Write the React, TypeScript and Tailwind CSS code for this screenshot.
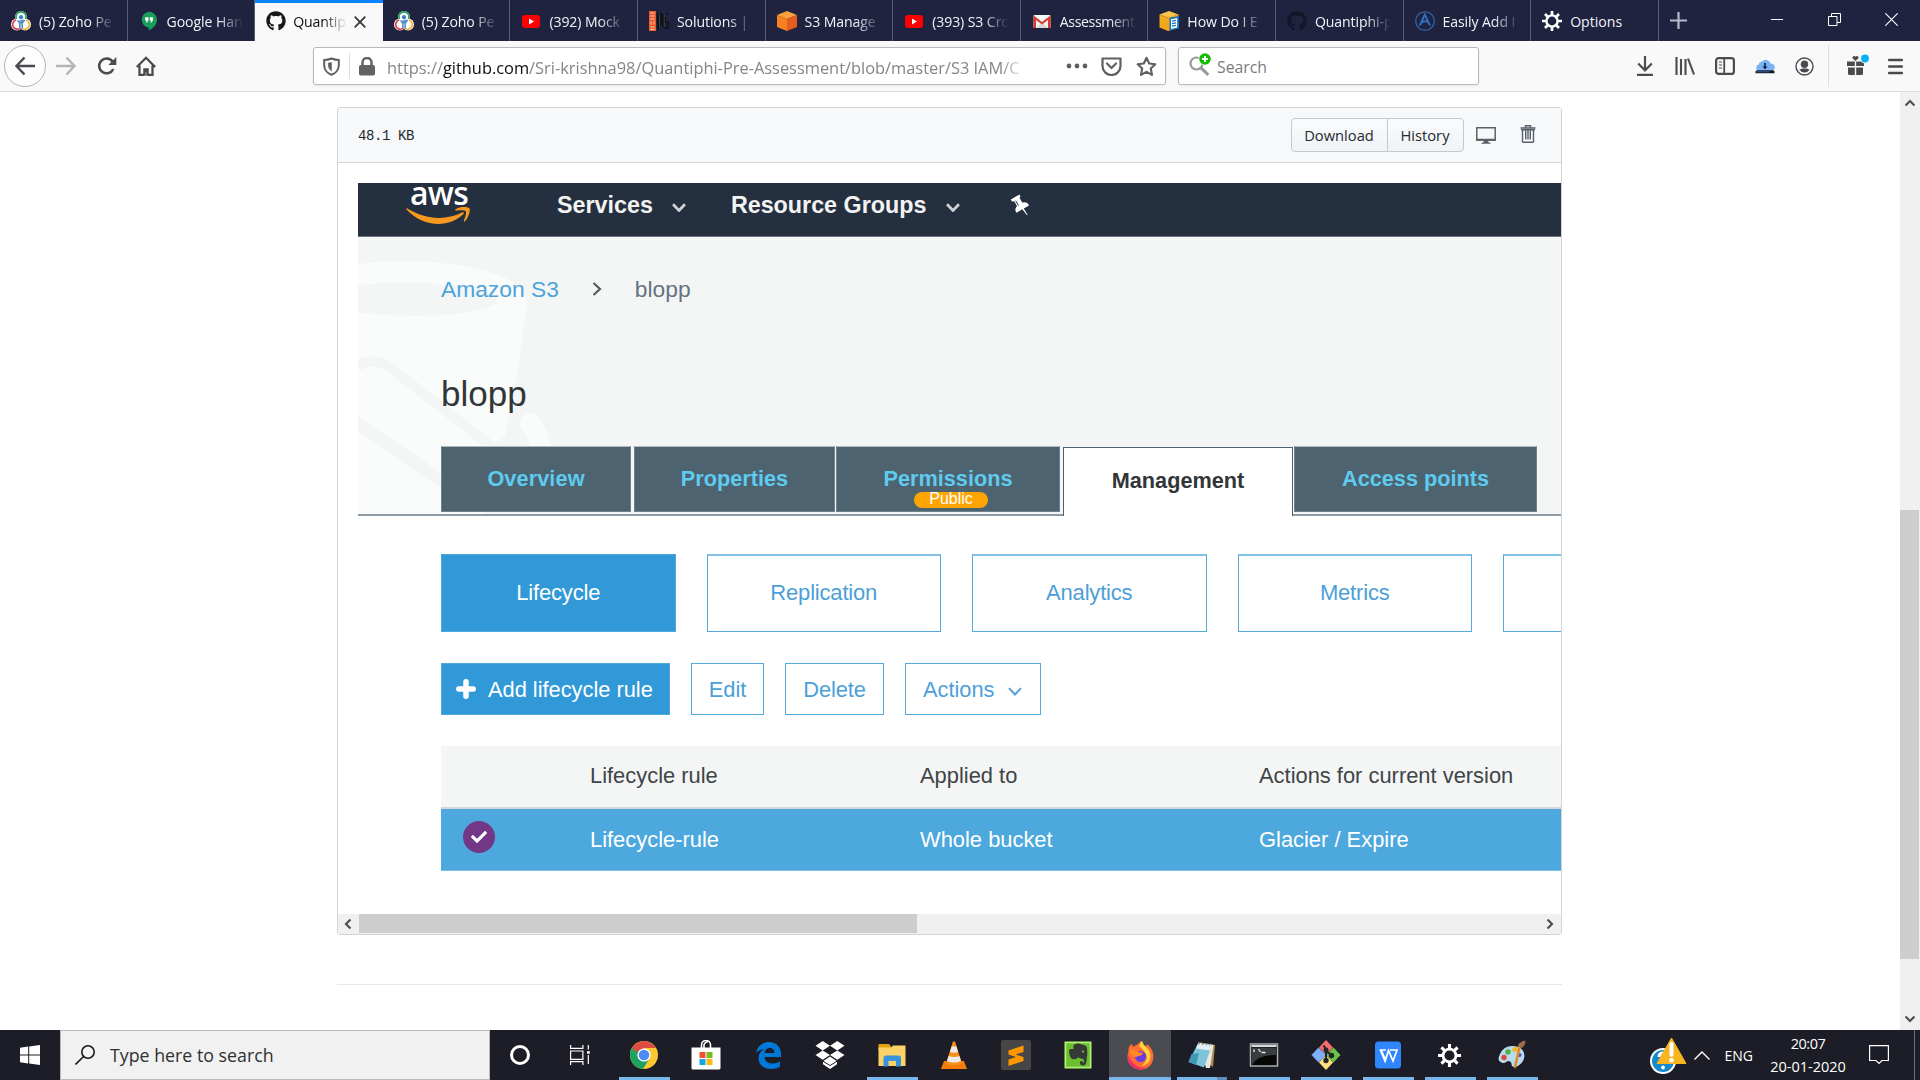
import React from "react";
import { FaGithub, FaCheck } from "react-icons/fa";

type Kids = { children?: React.ReactNode };

/* ---------- favicons ---------- */
const Zoho = () => (
  <svg className="size-5 shrink-0" viewBox="0 0 20 20" fill="none">
    <circle cx="10" cy="6" r="6" fill="#fff" />
    <circle cx="6" cy="13.5" r="6" fill="#fff" />
    <circle cx="14" cy="13.5" r="6" fill="#fff" />
    <path d="M5.5 8A5 5 0 1 1 14.5 8" stroke="#2f9e5a" strokeWidth="1.7" />
    <path d="M5 9A4.7 4.7 0 1 0 9.5 17" stroke="#e0343c" strokeWidth="1.6" />
    <path d="M15 9A4.7 4.7 0 1 1 10.5 17" stroke="#f3b32a" strokeWidth="1.6" />
    <circle cx="10" cy="6.2" r="2.1" fill="#3d7fc4" />
    <path d="M5.5 9.2Q8 10 10 9T14.5 9.2L12 12.5V17.5H8V12.5Z" fill="#5a90cc" />
    <path d="M10 12.5v5" stroke="#dfe9f5" strokeWidth="0.8" />
  </svg>
);
const Hangouts = () => (
  <svg className="size-5 shrink-0" viewBox="0 0 20 20">
    <path d="M10 .8A8 8 0 0 0 9.7 16.7V19.6C14 17.5 18 13.5 18 8.9A8 8 0 0 0 10 .8Z" fill="#1a9c5b" />
    <path d="M6.2 6.2h3.2v3.3L8 11.6H6.9L7.7 9.4H6.2ZM10.7 6.2h3.2v3.3l-1.4 2.1h-1.1l.8-2.2h-1.5Z" fill="#fff" />
  </svg>
);
const YouTube = () => (
  <svg className="size-5 shrink-0" viewBox="0 0 20 20">
    <rect x="1" y="4" width="18" height="13" rx="3" fill="#f00" />
    <path d="M8 7.5 13 10.5 8 13.5Z" fill="#fff" />
  </svg>
);
const Solutions = () => (
  <svg className="size-5 shrink-0" viewBox="0 0 20 20" fill="none">
    <rect x="0" y="0" width="7" height="20" fill="#ee5a24" />
    <path d="M1.5 2h4M1.5 5h4M1.5 8h4M2 10.5v3M5 10.5v3M1.5 16h4M1.5 18.5h4" stroke="#d8d2d2" strokeWidth="1" />
    <path d="M9 2v15M12 2v11l-3 5M14 3v14M17 3h2M16 6v5h3v6h-4" stroke="#111" strokeWidth="1.6" />
    <path d="M10.5 3v14M15.2 3v13" stroke="#555" strokeWidth="0.6" />
  </svg>
);
const S3Cube = () => (
  <svg className="size-5 shrink-0" viewBox="0 0 20 20">
    <path d="M10 0 20 4 10 8 0 4Z" fill="#f9a13a" />
    <path d="M0 4 10 8V20L0 16Z" fill="#f58220" />
    <path d="M20 4 10 8V20L20 16Z" fill="#e65c1e" />
  </svg>
);
const Gmail = () => (
  <svg className="size-5 shrink-0" viewBox="0 0 20 20">
    <rect x="1.5" y="4" width="17" height="13" rx="1" fill="#f2f2f2" />
    <path d="M4 17 10 12l6 5Z" fill="#d5d5d5" />
    <path d="M1.5 17V4.5L10 11 18.5 4.5V17H16V9L10 13.5 4 9V17Z" fill="#d93a2f" />
    <path d="M4 4H16L10 8.7Z" fill="#fafafa" />
  </svg>
);
const AwsDocs = () => (
  <svg className="size-5 shrink-0" viewBox="0 0 20 20">
    <path d="M10 0 19.5 3.5 10 7 .5 3.5Z" fill="#fcc34c" />
    <path d="M.5 3.5 9 6.8V20L.5 16.500Z" fill="#f2a81d" />
    <path d="M9 6.8 19.5 3.5V17L9 20Z" fill="#f2a81d" />
    <path d="M10.5 6.8 20 5V17.5L10.5 19.5Z" fill="#0d73bb" />
    <path d="M12 8.2 18.2 7V16.5L12 18Z" fill="#fff" />
    <path d="M13 10.2l4-.8M13 12.7l4-.8M13 15.2l4-.8" stroke="#0d73bb" strokeWidth="1.3" />
  </svg>
);
const CircleA = () => (
  <svg className="size-5 shrink-0" viewBox="0 0 20 20" fill="none" stroke="#2f6fbd">
    <circle cx="10" cy="10" r="9.3" strokeWidth="1.1" />
    <path d="M4.8 14.5 9.8 3.5 15 14.5M6.5 11.5Q10 9 13.7 11.5" strokeWidth="1.9" />
  </svg>
);
const Cog = ({ className }: { className: string }) => (
  <svg className={className} viewBox="0 0 20 20" fill="none" stroke="currentColor">
    <circle cx="10" cy="10" r="5.6" strokeWidth="2.4" />
    <path d="M10 4V0M10 16v4M4 10H0M16 10h4M5.7 5.7 3 3M14.3 5.7 17 3M5.7 14.3 3 17M14.3 14.3 17 17" strokeWidth="2.7" />
  </svg>
);

const tabs: { icon: React.ReactNode; text: string; active?: boolean }[] = [
  { icon: <Zoho />, text: "(5) Zoho Pe" },
  { icon: <Hangouts />, text: "Google Han" },
  { icon: <FaGithub className="size-5 shrink-0 text-[#191717]" />, text: "Quantip", active: true },
  { icon: <Zoho />, text: "(5) Zoho Pe" },
  { icon: <YouTube />, text: "(392) Mock" },
  { icon: <Solutions />, text: "Solutions | (" },
  { icon: <S3Cube />, text: "S3 Manage" },
  { icon: <YouTube />, text: "(393) S3 Cro" },
  { icon: <Gmail />, text: "Assessment" },
  { icon: <AwsDocs />, text: "How Do I E" },
  { icon: <FaGithub className="size-5 shrink-0 text-[#15152a]" />, text: "Quantiphi-p" },
  { icon: <CircleA />, text: "Easily Add I" },
  { icon: <Cog className="size-5 shrink-0 text-white" />, text: "Options" },
];

function TabBar() {
  return (
    <div className="flex h-[41px] bg-[#202340] text-[14.1px] text-[#f2f2f7]">
      {tabs.map((t, i) => (
        <div
          key={i}
          className={
            t.active
              ? "flex w-[127.6px] shrink-0 items-center border-t-[3px] border-[#0a84ff] bg-[#f9f9fa] pl-[11px] text-[#0c0c0d]"
              : "flex w-[127.6px] shrink-0 items-center border-r border-[#5b5d74] pl-[11px] pt-px"
          }
        >
          <span className={t.active ? "-translate-y-px" : ""}>{t.icon}</span>
          <div
            className={
              t.active
                ? "ml-[7px] w-[54px] whitespace-nowrap tracking-[-0.1px] [mask-image:linear-gradient(to_right,#000_55%,transparent)]"
                : t.text === "Options"
                  ? "ml-2 translate-y-[0.5px] whitespace-nowrap"
                  : t.text === "Assessment"
                    ? "ml-2 w-[77px] translate-y-[0.5px] whitespace-nowrap tracking-[-0.35px] [mask-image:linear-gradient(to_right,#000_65%,transparent)]"
                    : "ml-2 w-[78px] translate-y-[0.5px] whitespace-nowrap tracking-[-0.1px] [mask-image:linear-gradient(to_right,#000_65%,transparent_98%)]"
            }
          >
            {t.text}
          </div>
          {t.active && (
            <svg className="ml-[7px] size-3 shrink-0" viewBox="0 0 12 12" stroke="#38383d" strokeWidth="1.8">
              <path d="M.7.7 11.3 11.3M11.3.7.7 11.3" />
            </svg>
          )}
        </div>
      ))}
      <svg className="ml-[11px] mt-3 size-[17px]" viewBox="0 0 17 17" stroke="#b9bac6" strokeWidth="2.2">
        <path d="M8.5 0v17M0 8.5h17" />
      </svg>
      <div className="ml-auto flex items-start pr-[22px] pt-[13px]">
        <svg className="mr-[45px] h-3.5 w-3" viewBox="0 0 12 14" stroke="#fff"><path d="M0 6.5h12" /></svg>
        <svg className="mr-11 size-[13px]" viewBox="0 0 13 13" stroke="#fff" fill="none"><path d="M.5 3.5h8.5v9H.5ZM3.5 3.5v-3h9v9H9" /></svg>
        <svg className="size-[13px]" viewBox="0 0 13 13" stroke="#fff" strokeWidth="1.1"><path d="M.3.3 12.7 12.7M12.7.3.3 12.7" /></svg>
      </div>
    </div>
  );
}

function NavBar() {
  return (
    <div className="flex h-[51px] items-center border-b border-[#dcdcdd] bg-[#f9f9fa] text-[#4a4a4f]">
      <div className="ml-[4px] flex size-[42px] items-center justify-center rounded-full border border-[#b4b4b5] bg-[#fdfdfd]">
        <svg className="size-5" viewBox="0 0 20 20" fill="none" stroke="currentColor" strokeWidth="2.4"><path d="M20 10H1.5M9.5 1.5 1.5 10l8 8.5" /></svg>
      </div>
      <svg className="ml-[10px] size-5" viewBox="0 0 20 20" fill="none" stroke="#b5b5b7" strokeWidth="2.4"><path d="M0 10H18.500M10.5 1.5 18.5 10l-8 8.5" /></svg>
      <svg className="ml-[21px] size-5" viewBox="0 0 20 20" fill="none" stroke="currentColor" strokeWidth="2.5">
        <path d="M16.300 13A7.4 7.4 0 1 1 15.500 5.500" /><path d="M19.300 1v8h-8Z" fill="currentColor" stroke="none" />
      </svg>
      <svg className="ml-[19px] size-5" viewBox="0 0 20 20" fill="none" stroke="currentColor" strokeWidth="2.3">
        <path d="M.8 11 10 1.8 19.200 11M3.500 9.500V18.800H8M16.500 9.500V18.800H12" /><path d="M7.500 19.500v-7h5v7h-2v-3.500h-1v3.500Z" fill="currentColor" strokeWidth="0.5" />
      </svg>
      <div className="ml-[157px] flex h-[38px] w-[853px] items-center rounded-[3px] border border-[#b9b9bb] bg-white shadow-[0_1px_3px_rgba(0,0,0,0.08)]">
        <svg className="ml-[9px] h-[19px] w-[17px]" viewBox="0 0 17 19" fill="none" stroke="#5f5f63" strokeWidth="2">
          <path d="M8.5 1.500C11 2.500 13.500 3 15.800 3V8.500C15.800 13 12 16.500 8.500 17.800C5 16.500 1.200 13 1.200 8.500V3C3.500 3 6 2.500 8.500 1.500Z" />
          <path d="M8.500 5.500V14C6.500 12.500 5.300 10.500 5.300 8V6Z" fill="#5f5f63" strokeWidth="0.5" />
        </svg>
        <div className="ml-[9px] h-[26px] w-px bg-[#dcdcdd]" />
        <svg className="ml-[9px] h-[19px] w-4" viewBox="0 0 16 19" fill="none">
          <rect y="8" width="16" height="10.500" rx="1.800" fill="#636366" /><path d="M3.500 9V5.500a4.500 4.500 0 0 1 9 0V9" stroke="#636366" strokeWidth="2.5" />
        </svg>
        <div className="ml-3 mt-[4px] w-[639px] whitespace-nowrap text-[16.4px] text-[#858588] [mask-image:linear-gradient(to_right,#000_96%,transparent_100%)]">
          https://<span className="text-[#0c0c0d]">github.com</span>/Sri-krishna98/Quantiphi-Pre-Assessment/blob/master/S3 IAM/C
        </div>
        <svg className="ml-[40px] h-5 w-[22px]" viewBox="0 0 22 20" fill="#5f5f63"><circle cx="3" cy="10" r="2.4" /><circle cx="11" cy="10" r="2.4" /><circle cx="19" cy="10" r="2.4" /></svg>
        <svg className="ml-[13px] h-[19px] w-[21px]" viewBox="0 0 21 19" fill="none" stroke="#5f5f63" strokeWidth="2.2" strokeLinejoin="round">
          <path d="M1.500 1.500h18v7.500a9 9 0 0 1-18 0Z" /><path d="M6 6.500l4.500 4.500L15 6.500" strokeLinecap="round" />
        </svg>
        <svg className="ml-3.5 size-[21px]" viewBox="0 0 21 21" fill="none" stroke="#5f5f63" strokeWidth="2.1" strokeLinejoin="round"><path d="M10.500 1.800l2.700 5.700 6.100.8-4.500 4.300 1.200 6.300-5.500-3.100L5 18.900l1.200-6.300L1.700 8.300l6.100-.8Z" /></svg>
      </div>
      <div className="ml-3 flex h-[38px] w-[301px] items-center rounded-[3px] border border-[#b9b9bb] bg-white shadow-[0_1px_3px_rgba(0,0,0,0.08)]">
        <svg className="ml-2.5 h-[23px] w-[23px] -translate-y-0.5" viewBox="0 0 23 23" fill="none">
          <circle cx="7.5" cy="10.5" r="6" stroke="#98989b" strokeWidth="2.2" /><path d="M12 14.800l7.300 7" stroke="#98989b" strokeWidth="3" />
          <circle cx="16" cy="6" r="6.5" fill="#fff" /><circle cx="16" cy="6" r="5.8" fill="#12bc00" /><path d="M16 3v6M13 6h6" stroke="#fff" strokeWidth="1.9" />
        </svg>
        <div className="ml-[5px] mt-[4px] text-[15.8px] text-[#7a7a7d]">Search</div>
      </div>
      <div className="ml-auto flex h-full items-center">
        <svg className="h-5 w-4" viewBox="0 0 16 20" fill="none" stroke="currentColor" strokeWidth="2.2"><path d="M8 0v14M1.200 7.500 8 14.500l6.800-7M0 18.800h16" /></svg>
        <svg className="ml-[22px] h-[18px] w-5" viewBox="0 0 20 18" fill="none" stroke="currentColor" strokeWidth="2.1"><path d="M1.500 0v18M6 2v16M10.500 2v16M13 1.500l6 16" /></svg>
        <svg className="ml-5 h-[18px] w-5" viewBox="0 0 20 18" fill="none" stroke="currentColor" strokeWidth="2.2"><rect x="1.1" y="1.1" width="17.8" height="15.8" rx="2.5" /><path d="M9.200 1v16" strokeWidth="1.8" /><path d="M4 5h3M4 8h3M4 11h3" strokeWidth="1.2" /></svg>
        <svg className="ml-5 h-[15px] w-5" viewBox="0 0 20 15"><path d="M2.500 11.500A3.500 3.500 0 0 1 3.500 5.500 4 4 0 0 1 7 2.500a5 5 0 0 1 8.500 2A3.800 3.800 0 0 1 18 11.500Z" fill="#7ab3f5" /><path d="M2 11.300h16l1.500.9v2H.5v-2Z" fill="#15181f" /><path d="M1.500 12.800h13" stroke="#3b82f6" strokeWidth="0.7" /><path d="M9.200 4h1.600v3.500h1.800L10 10.300 7.400 7.500h1.800Z" fill="#0d1b3d" /></svg>
        <svg className="ml-5 size-[19px]" viewBox="0 0 19 19" fill="none"><circle cx="9.5" cy="9.5" r="8.5" stroke="currentColor" strokeWidth="1.4" /><circle cx="9.5" cy="7.300" r="3.7" fill="currentColor" /><path d="M4.200 12.500q2-.2 2.800-1h5q.800.8 2.800 1-2 3-5.300 3t-5.300-3Z" fill="currentColor" /></svg>
        <div className="ml-3.5 h-[42px] w-px bg-[#dedee0]" />
        <svg className="ml-[17px] h-[22px] w-6 -translate-y-px" viewBox="0 0 24 22"><path d="M1 7.500h7.800V12H1ZM10.200 7.500H18V12h-7.800ZM2 13.500h6.800V21H3.500A1.500 1.500 0 0 1 2 19.500ZM10.200 13.500H17v6a1.500 1.500 0 0 1-1.500 1.500h-5.300ZM9.500 7 6.500 4.300A1.700 1.700 0 0 1 9.500 2.800a1.700 1.700 0 0 1 3 1.500Z" fill="currentColor" /><circle cx="19" cy="4.500" r="5" fill="#f9f9fa" /><circle cx="19" cy="4.500" r="3.9" fill="#00b3f4" /></svg>
        <svg className="ml-[18px] mr-[17px] h-[17px] w-[15px]" viewBox="0 0 15 17" stroke="currentColor" strokeWidth="2.3" strokeLinecap="round"><path d="M1 2h13M1 8.500h13M1 15h13" /></svg>
      </div>
    </div>
  );
}

/* ---------- console capture shown inside the file viewer ---------- */
const Chevron = ({ className, w = 2.5 }: { className: string; w?: number }) => (
  <svg className={className} viewBox="0 0 14 9" fill="none" stroke="currentColor" strokeWidth={w}><path d="M1 1.200 7 7.500l6-6.300" /></svg>
);
const Pill = ({ children, filled }: Kids & { filled?: boolean }) => (
  <div className={filled
    ? "flex h-[78px] w-[234.5px] shrink-0 items-center justify-center border border-[#4ba9de] bg-[#3199d7] text-white"
    : "flex h-[78px] w-[234.5px] shrink-0 items-center justify-center border border-t-2 border-[#55aadd] border-t-[#83c2e6] bg-white text-[#4c9fd8]"}>
    <span className="-translate-y-px tracking-[-0.18px]">{children}</span>
  </div>
);

function Capture() {
  return (
    <div className="ml-5 h-[731px] overflow-hidden font-['Liberation_Sans',Arial,sans-serif] text-[22px]">
      <div className="flex h-[54px] items-start border-b border-[#68717f] bg-[#242f3f] text-[23.3px] font-bold text-[#f3f3f3]">
        <div className="ml-12 w-[66px]">
          <div className="-mt-[6px] text-center font-['Open_Sans',sans-serif] text-[32px] leading-[32px] font-semibold tracking-[-0.7px] text-white">aws</div>
          <svg className="-mt-px h-[19px] w-[66px] -translate-x-px -translate-y-px" viewBox="0 0 66 19" fill="#f7981f">
            <path d="M1.500 2.500Q0 1 2.500 1.500C20 12.500 40 14 57 5.500Q60 4.800 58.500 7C44 21 19 21 1.500 2.500Z" />
            <path d="M50.500 2.300C55 -.5 62 -.3 64.500 1.200 65.500 5 63.500 10.500 60 14.200Q58.300 15.500 59.200 12.500C60.500 9.500 61.500 6 60.800 4.200 59.500 2.800 55 3.200 51.300 3.600Q49.500 3.500 50.500 2.300Z" />
          </svg>
        </div>
        <span className="ml-[85px] mt-2 leading-7">Services</span>
        <Chevron className="ml-[19px] mt-[20px] h-[9px] w-3.5 text-[#ccd0d4]" w={2.8} />
        <span className="ml-[45px] mt-2 leading-7">Resource Groups</span>
        <Chevron className="ml-[20px] mt-[20px] h-[9px] w-3.5 text-[#ccd0d4]" w={2.8} />
        <svg className="ml-[50px] mt-[11px] h-[22px] w-5" viewBox="0 0 20 22" fill="#fff">
          <path d="M.8 5.500 9.500.5l1 2-1 1.200 2.700 4.800 2-.2C17 8.500 18.500 9.500 19 11.500L13.800 14.500l4 6.800-1-.3L12.300 15.300 6.500 18.700C5 17 5 15 6.200 13.200L7 12 4.200 7.200 2 7.500Z" />
          <path d="M5.700 6.700 8.500 11.500" stroke="#242f3f" strokeWidth="1" />
        </svg>
      </div>

      <div className="relative h-[279px] border-b-2 border-[#8e9aa5] bg-[#f4f6f6]">
        <svg className="absolute left-0 top-0 h-[277px] w-[200px]" viewBox="0 0 200 277" fill="none">
          <path d="M0 27C65 18 130 30 153 44Q169 53 169 68L157 150 146 198 125 277H0Z" fill="#fafcfc" />
          <path d="M0 48C50 42 100 46 130 56Q146 63 134 69C100 81 50 80 0 76Z" fill="#f4f6f6" />
          <path d="M0 129Q14 120 30 129L150 222" stroke="#f4f6f6" strokeWidth="10" />
          <path d="M-4 184 82 243 130 270" stroke="#f4f6f6" strokeWidth="13" />
          <path d="M146 199 126 215 125 277H200V194Z" fill="#f4f6f6" />
          <path d="M172 186Q188 205 180 240" stroke="#fafcfc" strokeWidth="20" strokeLinecap="round" />
          <path d="M100 150 157 150 147 200Z" fill="#fafcfc" />
        </svg>
        <div className="relative flex h-full flex-col pl-[83px]">
          <div className="mt-[38px] flex items-center leading-7">
            <span className="text-[22.8px] text-[#4da3da]">Amazon S3</span>
            <svg className="ml-[33px] h-3.5 w-2.5" viewBox="0 0 10 14" fill="none" stroke="#555b60" strokeWidth="2.2"><path d="M1.500 1 8 7l-6.500 6" /></svg>
            <span className="ml-[33px] text-[22.8px] text-[#647282]">blopp</span>
          </div>
          <div className="mt-[71px] text-[35px] leading-[40px] text-[#333638]">blopp</div>
          <div className="-mr-8 mt-auto flex h-[68px] items-start text-[21.7px] font-bold text-[#5fcbef]">
            <div className="flex h-[66px] w-[190px] items-center justify-center border border-t-[#aeb9c0] border-[#71828d] bg-[#4d6370]"><span className="tracking-[0.1px]">Overview</span></div>
            <div className="ml-[3px] flex h-[66px] w-[201px] items-center justify-center border border-t-[#aeb9c0] border-[#71828d] bg-[#4d6370]">Properties</div>
            <div className="relative ml-px flex h-[66px] w-[224px] items-center justify-center border border-t-[#aeb9c0] border-[#71828d] bg-[#4d6370]">
              Permissions
              <span className="absolute left-[77px] top-[45px] flex h-4 w-[74px] items-center justify-center rounded-lg bg-[#ffa503] text-[16px] font-normal leading-4 text-white"><span className="-translate-y-px">Public</span></span>
            </div>
            <div className="relative ml-[3px] mt-px flex h-[69px] w-[230px] items-center justify-center border border-b-0 border-[#4d6370] bg-white text-[#333638]"><span className="-translate-y-px">Management</span></div>
            <div className="ml-px flex h-[66px] w-[243px] items-center justify-center border border-t-[#aeb9c0] border-[#71828d] bg-[#4d6370]">Access points</div>
          </div>
        </div>
      </div>

      <div className="flex flex-col pl-[83px]">
        <div className="mt-[38px] flex gap-[31px]">
          <Pill filled>Lifecycle</Pill><Pill>Replication</Pill><Pill>Analytics</Pill><Pill>Metrics</Pill><Pill />
        </div>
        <div className="mt-[31px] flex h-[52px] text-[21.8px] text-[#4c9fd8]">
          <div className="flex w-[229px] items-center border border-[#4ba9de] bg-[#3199d7] pl-[14px] text-white">
            <svg className="size-[20px]" viewBox="0 0 20 20" stroke="#fff" strokeWidth="5.5" strokeLinecap="round"><path d="M10 2.800v14.400M2.800 10h14.400" /></svg>
            <span className="ml-[12px] translate-y-px whitespace-nowrap">Add lifecycle rule</span></div>
          <div className="ml-[21px] flex w-[73px] items-center justify-center border border-[#55aadd]"><span className="translate-y-px">Edit</span></div>
          <div className="ml-[21px] flex w-[99px] items-center justify-center border border-[#55aadd]"><span className="translate-y-px tracking-[-0.1px]">Delete</span></div>
          <div className="ml-[21px] flex w-[136px] items-center border border-[#55aadd] pl-[17px]"><span className="translate-y-px">Actions</span><Chevron className="ml-[14px] mt-1 h-[9px] w-3.5" w={1.9} /></div>
        </div>
        <div className="mt-[31px] flex h-[63px] items-center border-b-2 border-[#d3d7da] bg-[#f4f6f6] pl-[149px] text-[21.9px] text-[#3f4447]">
          <span className="w-[330px]">Lifecycle rule</span><span className="w-[339px]">Applied to</span><span className="whitespace-nowrap">Actions for current version</span>
        </div>
        <div className="flex h-[62px] items-center border-b border-[#7cc0e8] bg-[#4da8dd] text-[21.9px] text-white">
          <div className="ml-[22px] flex size-8 -translate-y-[3px] items-center justify-center rounded-full bg-[#733787]"><FaCheck className="size-4" /></div>
          <span className="ml-[95px] w-[330px] translate-y-px">Lifecycle-rule</span><span className="w-[339px] translate-y-px">Whole bucket</span><span className="translate-y-px">Glacier / Expire</span>
        </div>
      </div>
    </div>
  );
}

function FileBox() {
  return (
    <div className="ml-[337px] mt-[15px] w-[1225px] overflow-hidden rounded-[3px] border border-[#d1d5da] bg-white">
      <div className="flex h-[55px] items-center border-b border-[#d1d5da] bg-[#f6f8fa] pl-5">
        <span className="translate-y-px font-['Liberation_Mono',monospace] text-[14px] tracking-[-0.4px] text-[#24292e]">48.1 KB</span>
        <div className="ml-auto flex h-[34px] rounded-[4px] border border-[#c5c9cd] bg-linear-to-b from-[#fafbfc] to-[#eff3f6] text-[14.7px] leading-8 text-[#24292e]">
          <span className="w-24 border-r border-[#c5c9cd] pr-px text-center">Download</span><span className="w-[75px] pr-px text-center">History</span>
        </div>
        <svg className="ml-3 h-[17px] w-5" viewBox="0 0 20 17" fill="none" stroke="#586069"><path d="M.8.800H19.200V13H.8Z" strokeWidth="1.5" /><path d="M0 12.800h20" strokeWidth="2" /><path d="M8 13h4v2l2.500 1.500h-9L8 15Z" fill="#586069" strokeWidth="0.5" /></svg>
        <svg className="ml-6 mr-[25px] h-[18px] w-4 -translate-y-px" viewBox="0 0 16 18" fill="none" stroke="#586069" strokeWidth="1.4"><path d="M.5 3h15M5.500 2.500V.8h5v1.700M1 4.800h14" /><path d="M2.500 5v11.500q0 .8.800.8h9.400q.8 0 .8-.8V5M5.700 5v9.500M8 5v9.500M10.300 5v9.500" /></svg>
      </div>
      <div className="h-5" />
      <Capture />
      <div className="flex h-[20px] items-center border-b border-[#f0f0f0] bg-[#f0f0f0]">
        <svg className="mx-[6px] h-[10px] w-2" viewBox="0 0 8 10" fill="none" stroke="#505050" strokeWidth="2.2"><path d="M6.500.5 2 5l4.500 4.500" /></svg>
        <div className="ml-px h-full w-[558px] bg-[#cdcdcd]" />
        <svg className="ml-auto mr-[7px] h-[10px] w-2" viewBox="0 0 8 10" fill="none" stroke="#505050" strokeWidth="2.2"><path d="M1.500.5 6 5 1.500 9.500" /></svg>
      </div>
    </div>
  );
}

/* ---------- taskbar ---------- */
const I = ({ children }: Kids) => <svg className="size-[30px]" viewBox="0 0 30 30" fill="none">{children}</svg>;

const apps: { icon: React.ReactNode; run?: boolean; active?: boolean; stacked?: boolean }[] = [
  { run: true, icon: <I><circle cx="15" cy="15" r="14" fill="#fcc934" /><path d="M2.900 8A14 14 0 0 0 14 29L20.500 18.500 9.500 18.500Z" fill="#1ba261" /><path d="M2.900 8 9.500 18.500 15 15 14 8Z" fill="#1ba261" /><path d="M2.900 8A14 14 0 0 1 27.100 8H15L9 12.500Z" fill="#dc4c40" /><circle cx="15" cy="15" r="6.6" fill="#fff" /><circle cx="15" cy="15" r="5.3" fill="#4d8bf5" /></I> },
  { icon: <I><path d="M10.500 8.500V5a4.500 4.500 0 0 1 9 0v3.500M13 8V4.500Q14 2 17 1.500" stroke="#fff" strokeWidth="1.6" /><path d="M.5 7.500h29V28q0 1.500-1.500 1.500H2Q.5 29.500.5 28Z" fill="#fff" /><path d="M8.500 12h6v6h-6Z" fill="#f0502c" /><path d="M15.500 12h6v6h-6Z" fill="#7cba1c" /><path d="M8.500 19h6v6h-6Z" fill="#17a5ea" /><path d="M15.500 19h6v6h-6Z" fill="#fdb914" /></I> },
  { icon: <I><path d="M3 13C4.500 5.500 10 2 16 2c7.500 0 12 5.500 12 11.500V17H11.500c.3 4.500 4 6.500 8 6.500 3 0 5.300-.8 7.500-2.200v5.500C24.500 28.300 21.500 29 18 29 10.500 29 5.500 24.500 5.500 18.500c0-4.300 2-7.500 5.500-9.500C8 9.300 5 10.800 3 13ZM11.500 13h10c0-3-1.700-5-4.700-5S12 10 11.500 13Z" fill="#0078d7" fillRule="evenodd" /></I> },
  { icon: <I><path d="M7.700 1 15 5.700 7.700 10.400.5 5.700ZM22.300 1l7.200 4.700-7.200 4.700L15 5.700ZM7.700 10.400 15 15 7.700 19.700.5 15ZM22.300 10.400 29.500 15l-7.200 4.700L15 15Z" fill="#fff" /><path d="M15 16.500l7 4.700v3L15 29l-7-4.800v-3Z" fill="#fff" /><path d="M7.700 21 15 25.600 22.300 21" stroke="#1c1d27" strokeWidth="1" /></I> },
  { run: true, icon: <I><path d="M1.500 4H12l2 2.500v4H1.500Z" fill="#e0a10e" /><path d="M1.500 7.500H14L16 5.500H28.500V26H1.500Z" fill="#fdd367" /><path d="M6.500 26.500V18q0-2.500 2.500-2.500H21.500q2.500 0 2.500 2.500v8.500H19V21H11.500v5.500Z" fill="#3a91dc" /></I> },
  { icon: <I><path d="M5 21H25L28 29H2Z" fill="#f57c0a" /><path d="M14 1.500h2L23 23.500Q15 27 7 23.500Z" fill="#f88f1d" /><path d="M12.600 6.500h4.800l1.700 5.500q-4 1.500-8.200 0ZM9.600 16q5.500 2 10.800 0l1.600 5q-7 3-14 0Z" fill="#ececec" /></I> },
  { icon: <I><rect width="30" height="30" rx="2" fill="#464646" /><path d="M7.500 10.500 22.500 5.500V12L14.500 14.500 22.500 17V21L7.500 26V19.500L15 17 7.500 14.500Z" fill="#ff9800" /></I> },
  { icon: <I><rect x="1.5" y="1.5" width="27" height="27" fill="#6cc030" /><rect x="2.5" y="2.5" width="25" height="25" stroke="#b6ee7e" strokeWidth="1.5" /><path d="M10.500 5Q15 2.500 19 4.500 23.500 5 24 8 25 14 23.500 21q-.5 5-4 4.500-3-.5-2.500-3.500.5-1.500 2.500-1l.5 2q1 .2 1-1.800 0-2.700-3-2.700-2 0-2.500-1.500Q13 20 9.500 19 6.500 18 6 11q0-2 2-2h2.500Z" fill="#353a38" /><circle cx="20" cy="11.5" r="1" fill="#8bd14e" /></I> },
  { run: true, active: true, icon: <I><circle cx="15" cy="17" r="12.5" fill="#ff6a2b" /><path d="M3.500 11C3 8 5 5 7 3.500q-.3 3 2.500 5.500Q11 5 16 1q1 4 3.500 6Q22 6 22 4q6 5 6.500 12 0 9-7.500 12.500Q14 31 8 27 2 22 3.500 11Z" fill="#ff6b32" /><path d="M14 6Q15 3 17 .8 18 5 22 8q4 4 3.500 9-1 8-9 9Q24 20 21 14 19 10 14 6Z" fill="#ffd43e" /><path d="M3 15q-1 9 6 13 7 3 13-1-9 2-14-4-4-4-5-8Z" fill="#f52a6a" /><circle cx="15.5" cy="16.5" r="5.5" fill="#6a3be0" /><path d="M5 10q5-1 8 2l5 1q-1 3-5 3-2 2-5 0Q5 14 5 10Z" fill="#ff8a22" /></I> },
  { run: true, stacked: true, icon: <I><path d="M11 2 28 5 26 27 22 24Z" fill="#b08d4a" /><path d="M12 3 26.500 5 23 28 19 28Z" fill="#e8e8e0" /><path d="M11 3.500 25 5 17 27.500 1.500 22Z" fill="#7ec4d8" /><path d="M11 3.500 25 5 23 10.500 9 8.500Z" fill="#e3eff2" /><path d="M4.500 14 12 13 9 25 1.500 22Z" fill="#3e99b5" /><path d="M12 4.500l.5-2M15.500 5l.5-2M19 5.300l.5-2M22.500 5.500l.5-2" stroke="#778" /></I> },
  { run: true, icon: <I><rect x="1.5" y="4" width="27" height="22" fill="#080808" stroke="#a9aeb2" strokeWidth="1.5" /><rect x="2.5" y="5" width="25" height="2" fill="#d5d9dc" /><path d="M3 7.500H27V15Q8 15 3 25Z" fill="#3a3d40" /><path d="M5 9.500v2.500M7.500 9v.1M7.500 11.500v.1M9.500 9l2 3M12.500 12.500h4" stroke="#eee" strokeWidth="1.3" /></I> },
  { run: true, icon: <I><path d="M15 0 22 7.500 15 15 8 7.500Z" fill="#f36c6c" /><path d="M7.500 7.500 15 15 7.500 22.500.5 15Z" fill="#7cb0fb" /><path d="M22.500 7.500 29.500 15 22.500 22.500 15 15Z" fill="#6cc644" /><path d="M15 15 22 22.500 15 30 8 22.500Z" fill="#ffe27a" /><path d="M12.500 5.500 15 9V20M15 10.500 20 15" stroke="#22262b" strokeWidth="2" /><circle cx="15" cy="10" r="2.5" fill="#22262b" /><circle cx="15" cy="20.5" r="2.7" fill="#22262b" /><circle cx="20.5" cy="15.5" r="2.7" fill="#22262b" /></I> },
  { run: true, icon: <I><rect x="2" y="1.5" width="26" height="27" rx="3.5" fill="#2f86ff" /><path d="M6.500 10H13M17 10h7l-4 11-4.500-10.500L12 21 7.500 10.500M8 9.500 12.500 20 15.500 10.500" stroke="#fff" strokeWidth="1.7" /></I> },
  { run: true, icon: <Cog className="size-[23px] -translate-x-px text-white" /> },
  { run: true, icon: <I><path d="M3 14Q7 5 17 6q10 1 10.500 10-1 9-10 11-3 0-3-3 0-3-4-3-3 3-6 1.500Q-.5 21 3 14Z" fill="#b7dcef" /><circle cx="7" cy="17.5" r="2.7" fill="#e1483a" /><circle cx="11" cy="12" r="2.7" fill="#4fb04c" /><circle cx="18" cy="9.5" r="2.7" fill="#f2b92a" /><circle cx="22.5" cy="15" r="2" fill="#5c4bc0" /><path d="M24 6 19.500 27 17.500 29 17 26 21.500 6Z" fill="#e08a2e" /><path d="M21 6Q21 2.500 28 .5 29.500 4 25 8Z" fill="#9c6b47" /></I> },
];

function Taskbar() {
  return (
    <div className="flex h-[50px] bg-[#1c1d26] text-white">
      <div className="flex w-[60px] items-center justify-center">
        <svg className="size-5" viewBox="0 0 20 20" fill="#fff"><path d="M0 2.800 8.200 1.500V9.500H0ZM9.200 1.400 20 0V9.500H9.200ZM0 10.500H8.200v8L0 17.300ZM9.200 10.500H20V20L9.200 18.600Z" /></svg>
      </div>
      <div className="flex w-[430px] items-center border border-[#b9b9b9] bg-[#f1f1f1] pl-3.5">
        <svg className="size-5" viewBox="0 0 20 20" fill="none" stroke="#1b1b1b" strokeWidth="1.6"><circle cx="13" cy="7" r="6.2" /><path d="M8.600 11.500.5 19.500" /></svg>
        <span className="ml-[15px] text-[17.8px] text-[#303030]">Type here to search</span>
      </div>
      <div className="flex w-[60px] items-center justify-center"><div className="size-5 rounded-full border-[3px] border-white" /></div>
      <div className="flex w-[60px] items-center justify-center">
        <svg className="size-5" viewBox="0 0 20 20" fill="none" stroke="#fff" strokeWidth="1.2"><path d="M.6 0v3.400h12.300V0M.6 20v-3.400h12.300V20M.6 6h12.300v8.300H.6ZM18.300 0v4.500M18.300 10v9" /><path d="M17 6.200h2.800v2.500H17Z" fill="#fff" stroke="none" /></svg>
      </div>
      <div className="ml-[3px] flex">
        {apps.map((a, i) => (
          <div key={i} className={a.active ? "relative flex w-[62px] items-center justify-center bg-[#4b4b52]" : "relative flex w-[62px] items-center justify-center"}>
            {a.icon}
            {a.run && <div className={a.active ? "absolute inset-x-0 bottom-0 h-[3px] bg-[#78b8ef]" : a.stacked ? "absolute bottom-0 left-[6px] h-[3px] w-[50px] border-r-[10px] border-[#5b8db8] bg-[#78b8ef]" : "absolute inset-x-[5.5px] bottom-0 h-[3px] bg-[#78b8ef]"} />}
          </div>
        ))}
      </div>
      <div className="ml-auto flex items-center">
        <svg className="h-[37px] w-[38px]" viewBox="0 0 38 37">
          <circle cx="14" cy="24" r="13" fill="#fff" /><circle cx="14" cy="24" r="11" fill="#1489cc" /><path d="M10 20q0-4 4-4t4 4q0 2-2 3.500t-2 3.500" stroke="#fff" strokeWidth="3" fill="none" /><circle cx="14" cy="30.5" r="1.9" fill="#fff" />
          <path d="M22.500 1 37 26.500H8Z" fill="#f9b520" stroke="#f9b520" strokeWidth="1" strokeLinejoin="round" /><path d="M22.500 7v11" stroke="#fff" strokeWidth="4" strokeLinecap="round" /><circle cx="22.5" cy="23.2" r="2.3" fill="#fff" />
        </svg>
        <svg className="ml-[7px] h-[9px] w-4" viewBox="0 0 16 9" fill="none" stroke="#fff" strokeWidth="1.4"><path d="M.5 8.500 8 1l7.500 7.500" /></svg>
        <span className="ml-[15px] text-[14px]">ENG</span>
        <div className="ml-[17px] flex w-[76px] flex-col items-center whitespace-nowrap text-[14.5px] leading-[23px]"><span className="tracking-[-0.5px]">20:07</span><span>20-01-2020</span></div>
        <svg className="ml-[23px] h-5 w-5" viewBox="0 0 20 20" fill="none" stroke="#fff" strokeWidth="1.2"><path d="M.6.600H19.400V15.500H13L10 18.500 7 15.500H.6Z" /></svg>
        <div className="ml-[25px] mr-[5px] h-[50px] w-px bg-[#6d6e75]" />
      </div>
    </div>
  );
}

export default function App() {
  return (
    <div className="flex h-[1080px] w-[1920px] flex-col overflow-hidden bg-white font-['Open_Sans','Noto_Sans',sans-serif]">
      <TabBar />
      <NavBar />
      <div className="flex h-[938px]">
        <div className="w-[1900px]">
          <FileBox />
          <div className="ml-[337px] mt-[49px] h-px w-[1225px] bg-[#e6e8eb]" />
        </div>
        <div className="flex w-5 flex-col items-center border-r border-[#f0f0f0] bg-[#f0f0f0]">
          <svg className="mt-[7px] h-2 w-2.5" viewBox="0 0 10 8" fill="none" stroke="#505050" strokeWidth="2.2"><path d="M.5 6.500 5 2l4.500 4.500" /></svg>
          <div className="mt-[403px] h-[449px] w-full bg-[#cdcdcd]" />
          <svg className="mb-[7px] mt-auto h-2 w-2.5" viewBox="0 0 10 8" fill="none" stroke="#505050" strokeWidth="2.2"><path d="M.5 1.500 5 6l4.500-4.500" /></svg>
        </div>
      </div>
      <Taskbar />
    </div>
  );
}
